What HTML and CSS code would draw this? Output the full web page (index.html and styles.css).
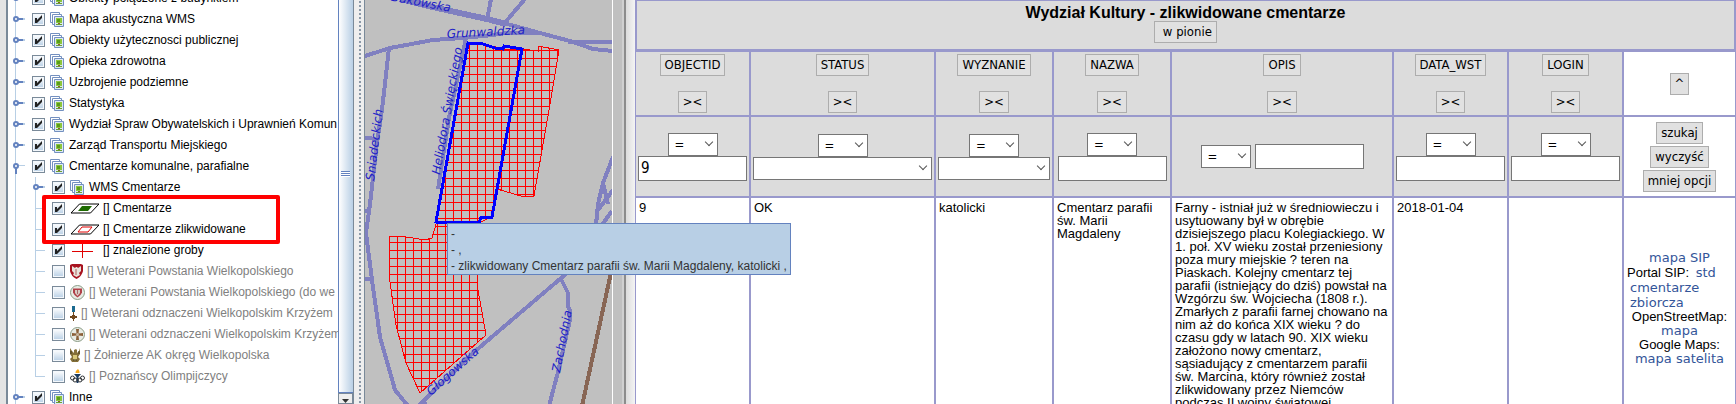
FILE: index.html
```html
<!DOCTYPE html>
<html lang="pl">
<head>
<meta charset="utf-8">
<title>Wydział Kultury - zlikwidowane cmentarze</title>
<link rel="stylesheet" href="styles.css">
</head>
<body>
<svg class="defs" aria-hidden="true">
  <symbol id="layers" viewBox="0 0 15 15">
    <g fill="#fff" stroke="#7390c0"><path d="M.5.5h9v10h-9z"/><path d="M2.500 2.500h9v10h-9z"/><path d="M4.500 4.500h9v10h-9z" fill="#dce8f4"/></g>
    <path d="M6 6h6v5H6z" fill="#8cc63c"/><path d="M7 7h3v3H7z" fill="#5a9c1c"/><path d="M8 11h2v2H8z" fill="#8a6030"/><path d="M6 12h6v1H6z" fill="#6aa030"/>
  </symbol>
</svg>
<main class="app">
  <aside class="tree">
    <ul class="nodes">
      <li><div class="row"><span class="knob"></span><input type="checkbox" id="n0" checked><label for="n0"><svg class="ic w15"><use href="#layers"/></svg>Obiekty połączone z budynkiem</label></div></li>
      <li><div class="row"><span class="knob"></span><input type="checkbox" id="n1" checked><label for="n1"><svg class="ic w15"><use href="#layers"/></svg>Mapa akustyczna WMS</label></div></li>
      <li><div class="row"><span class="knob"></span><input type="checkbox" id="n2" checked><label for="n2"><svg class="ic w15"><use href="#layers"/></svg>Obiekty użytecznosci publicznej</label></div></li>
      <li><div class="row"><span class="knob"></span><input type="checkbox" id="n3" checked><label for="n3"><svg class="ic w15"><use href="#layers"/></svg>Opieka zdrowotna</label></div></li>
      <li><div class="row"><span class="knob"></span><input type="checkbox" id="n4" checked><label for="n4"><svg class="ic w15"><use href="#layers"/></svg>Uzbrojenie podziemne</label></div></li>
      <li><div class="row"><span class="knob"></span><input type="checkbox" id="n5" checked><label for="n5"><svg class="ic w15"><use href="#layers"/></svg>Statystyka</label></div></li>
      <li><div class="row"><span class="knob"></span><input type="checkbox" id="n6" checked><label for="n6"><svg class="ic w15"><use href="#layers"/></svg>Wydział Spraw Obywatelskich i Uprawnień Komun</label></div></li>
      <li><div class="row"><span class="knob"></span><input type="checkbox" id="n7" checked><label for="n7"><svg class="ic w15"><use href="#layers"/></svg>Zarząd Transportu Miejskiego</label></div></li>
      <li><div class="row"><span class="knob open"></span><input type="checkbox" id="n8" checked><label for="n8"><svg class="ic w15"><use href="#layers"/></svg>Cmentarze komunalne, parafialne</label></div>
        <ul class="children">
          <li><div class="row"><span class="knob"></span><input type="checkbox" id="c0" checked><label for="c0"><svg class="ic w15"><use href="#layers"/></svg>WMS Cmentarze</label></div></li>
          <li class="marked">
            <div class="row"><span class="stub"></span><input type="checkbox" id="c1" checked><label for="c1"><svg class="ic w29" viewBox="0 0 29 12"><path d="M1 10.500 9.500 1.500H29L20.500 10.500z" fill="#fff" stroke="#000"/><path d="M8 8.500 12 3.500h10l-4 5z" fill="#1d6b00"/></svg>[] Cmentarze</label></div>
            <div class="row"><span class="stub"></span><input type="checkbox" id="c2" checked><label for="c2"><svg class="ic w29" viewBox="0 0 29 12"><path d="M1 10.500 9.500 1.500H29L20.500 10.500z" fill="#fff" stroke="#000"/><path d="M8 8.500 12 3.500h10l-4 5z" fill="#fff" stroke="#e00000"/></svg>[] Cmentarze zlikwidowane</label></div>
          </li>
          <li><div class="row"><span class="stub"></span><input type="checkbox" id="c3" checked><label for="c3"><svg class="ic w29" viewBox="0 0 29 15"><path d="M2 8.500h21M12.500 1v14" stroke="#e00000"/></svg>[] znalezione groby</label></div></li>
          <li><div class="row off"><span class="stub"></span><input type="checkbox" id="c4"><label for="c4"><svg class="ic w13" viewBox="0 0 13 15"><path d="M0 1 2 0h9l2 1v6q-1 5-6.500 8Q1 12 0 7z" fill="#a81420"/><path d="M2 2l3 2 1-1 1 0 1 1 3-2v5L9 9l1 2-3.500 2L3 11l1-2-2-2z" fill="#e8e4dc"/><path d="M6 5v6" stroke="#b06060"/></svg>[] Weterani Powstania Wielkopolskiego</label></div></li>
          <li><div class="row off"><span class="stub"></span><input type="checkbox" id="c5"><label for="c5"><svg class="ic w15" viewBox="0 0 15 15"><circle cx="7.500" cy="7.500" r="7" fill="#e8ebe4" stroke="#8a9c86"/><path d="M3 3.500h9v4q-1 3-4.500 5Q4 10.500 3 7.500z" fill="#b04048"/><path d="M5 5h5v3L7.500 11 5 8z" fill="#d8ccc4"/><path d="M7.500 5v4" stroke="#a86868"/></svg>[] Weterani Powstania Wielkopolskiego (do we</label></div></li>
          <li><div class="row off"><span class="stub"></span><input type="checkbox" id="c6"><label for="c6"><svg class="ic w7" viewBox="0 0 7 15"><path d="M2 0h3v6H2z" fill="#1b6a90"/><path d="M3 6h1v9H3zM0 10h7v2H0zM2 9h3v4H2z" fill="#704820"/></svg>[] Weterani odznaczeni Wielkopolskim Krzyżem</label></div></li>
          <li><div class="row off"><span class="stub"></span><input type="checkbox" id="c7"><label for="c7"><svg class="ic w15" viewBox="0 0 15 15"><circle cx="7.500" cy="7.500" r="7" fill="#e8ebe4" stroke="#8a9c86"/><path d="M6 2h3l-.5 4.500L13 6v3l-4.500-.5L9 13H6l.5-4.500L2 9V6l4.500.5z" fill="#8a6038"/><circle cx="7.500" cy="7.500" r="1.500" fill="#c8b8a0"/></svg>[] Weterani odznaczeni Wielkopolskim Krzyżem</label></div></li>
          <li><div class="row off"><span class="stub"></span><input type="checkbox" id="c8"><label for="c8"><svg class="ic w10" viewBox="0 0 10 15"><path d="M0 0l2 3 2 2V2l2-1 1 1v3l2-2 1-3v6L8 9l2 2-2 3H2l-2-3 2-2L0 6z" fill="#857038"/><path d="M3 7h4v4l-2 2-2-2z" fill="#d8c878"/><path d="M1 3v3M9 3v3M3 12h4" stroke="#403820"/></svg>[] Żołnierze AK okręg Wielkopolska</label></div></li>
          <li><div class="row off last"><span class="stub"></span><input type="checkbox" id="c9"><label for="c9"><svg class="ic w15" viewBox="0 0 15 15"><path d="M5.500 4Q5 2 8 0q2 2 1.500 4z" fill="#f8a818"/><path d="M4 5h7L8.500 8v6h-2V8z" fill="#1c3c60"/><g fill="none" stroke="#303438"><circle cx="2.500" cy="9" r="2"/><circle cx="12.500" cy="9" r="2"/><circle cx="5" cy="11" r="2"/><circle cx="10" cy="11" r="2"/></g></svg>[] Poznańscy Olimpijczycy</label></div></li>
        </ul>
      </li>
      <li><div class="row"><span class="knob"></span><input type="checkbox" id="n9" checked><label for="n9"><svg class="ic w15"><use href="#layers"/></svg>Inne</label></div></li>
    </ul>
  </aside>
  <div class="scrollbar"><div class="thumb"><span class="grip"></span></div><button class="down" aria-label="Przewiń w dół"></button></div>
  <div class="splitter"></div>
  <section class="map">
    <svg class="canvas" viewBox="365 0 247 404" preserveAspectRatio="xMinYMin slice">
      <defs><pattern id="grid" width="8" height="8" x="5" y="2" patternUnits="userSpaceOnUse"><path d="M.5 0v8M0 .5h8" stroke="#f00" shape-rendering="crispEdges"/></pattern></defs>
      <g fill="none" stroke="#8080c0" stroke-width="4" shape-rendering="crispEdges">
        <path d="M400-1 437 8 487 19 506 24" stroke-width="6"/>
        <path d="M500 22 540 33 570 41 593 49 613 51M568 41.500H613M365 56 390 48 433 40 463 38 493 35 506 33H540M491-1 487 20M525-1 503 25"/>
        <path d="M389 48 382 110 377 143 370 204 366 233 372 280 380 337 395 390 408 406M365 138l13 1M365 211h5M365 279h6"/>
        <path d="M466 38 449 118 438 189"/>
        <path d="M418 406 473 353 567 273 598 245M560 277l8 16v13l2 5v9l-12 52-9 34M422 400l5 6"/>
        <path d="M613 157 603 183 598 204 596 225M603 183 608 204M613 190 598 210M612 211 601 226"/>
      </g>
      <path d="M612 268 582 406" fill="none" stroke="#886655" stroke-width="4" shape-rendering="crispEdges"/>
      <g fill="url(#grid)" stroke="#f00" shape-rendering="crispEdges">
        <path d="M468 43 484 44 504 49 522 49 538 51V46L559 50 549 110 534 196H521L497 189 491 217 479 223 477 262 478 290 482 312 486 335 420 393 406 363 396 325 389 275V250L390 236H400L425 240 432 238 437 221z"/>
      </g>
      <path d="M436 222 468 43 483 44 495 48 503 49 504 46 522 49 492 217H481L479 223z" fill="none" stroke="#00f" stroke-width="3" shape-rendering="crispEdges"/>
      <g class="street">
        <text transform="translate(450 12) rotate(11)" text-anchor="end">Bukowska</text>
        <text transform="translate(447 38) rotate(-3)">Grunwaldzka</text>
        <text transform="translate(440 175) rotate(-80)">Heliodora Święckiego</text>
        <text transform="translate(374 181) rotate(-83)">Śniadeckich</text>
        <text transform="translate(560 373) rotate(-79)">Zachodnia</text>
        <text transform="translate(431 396) rotate(-42)">Głogowska</text>
      </g>
    </svg>
    <div class="tooltip" role="tooltip">-<br>- ,<br>- zlikwidowany Cmentarz parafii św. Marii Magdaleny, katolicki ,</div>
  </section>
  <div class="frame"></div>
  <section class="records">
    <header class="title"><h1>Wydział Kultury - zlikwidowane cmentarze</h1><button>&nbsp;w pionie</button></header>
    <table>
      <colgroup><col class="c-id"><col class="c-status"><col class="c-mid"><col class="c-mid"><col class="c-opis"><col class="c-date"><col class="c-date"><col class="c-act"></colgroup>
      <thead>
        <tr class="names">
          <th><button>OBJECTID</button><button>&gt;&lt;</button></th>
          <th><button>STATUS</button><button>&gt;&lt;</button></th>
          <th><button>WYZNANIE</button><button>&gt;&lt;</button></th>
          <th><button>NAZWA</button><button>&gt;&lt;</button></th>
          <th><button>OPIS</button><button>&gt;&lt;</button></th>
          <th><button>DATA_WST</button><button>&gt;&lt;</button></th>
          <th><button>LOGIN</button><button>&gt;&lt;</button></th>
          <td class="plain"><button>^</button></td>
        </tr>
        <tr class="filters">
          <td><div class="pair"><span class="sel op"><select aria-label="OBJECTID operator"><option>=</option></select></span><input type="text" value="9" aria-label="OBJECTID"></div></td>
          <td><div class="pair"><span class="sel op"><select aria-label="STATUS operator"><option>=</option></select></span><span class="sel wide"><select aria-label="STATUS"><option></option></select></span></div></td>
          <td><div class="pair"><span class="sel op"><select aria-label="WYZNANIE operator"><option>=</option></select></span><span class="sel wide"><select aria-label="WYZNANIE"><option></option></select></span></div></td>
          <td><div class="pair"><span class="sel op"><select aria-label="NAZWA operator"><option>=</option></select></span><input type="text" aria-label="NAZWA"></div></td>
          <td><div class="pair inline"><span class="sel op"><select aria-label="OPIS operator"><option>=</option></select></span><input type="text" aria-label="OPIS"></div></td>
          <td><div class="pair"><span class="sel op"><select aria-label="DATA_WST operator"><option>=</option></select></span><input type="text" aria-label="DATA_WST"></div></td>
          <td><div class="pair"><span class="sel op"><select aria-label="LOGIN operator"><option>=</option></select></span><input type="text" aria-label="LOGIN"></div></td>
          <td class="plain"><div class="actions"><button>szukaj</button><button>wyczyść</button><button>mniej opcji</button></div></td>
        </tr>
      </thead>
      <tbody>
        <tr>
          <td>9</td><td>OK</td><td>katolicki</td><td>Cmentarz parafii<br>św. Marii<br>Magdaleny</td>
          <td>Farny - istniał już w średniowieczu i<br>usytuowany był w obrębie<br>dzisiejszego placu Kolegiackiego. W<br>1. poł. XV wieku został przeniesiony<br>poza mury miejskie ? teren na<br>Piaskach. Kolejny cmentarz tej<br>parafii (istniejący do dziś) powstał na<br>Wzgórzu św. Wojciecha (1808 r.).<br>Zmarłych z parafii farnej chowano na<br>nim aż do końca XIX wieku ? do<br>czasu gdy w latach 90. XIX wieku<br>założono nowy cmentarz,<br>sąsiadujący z cmentarzem parafii<br>św. Marcina, który również został<br>zlikwidowany przez Niemców<br>podczas II wojny światowej.</td>
          <td>2018-01-04</td><td></td>
          <td class="links"><a href="#">mapa SIP</a><p class="portal">Portal SIP: <a href="#">std<br>cmentarze<br>zbiorcza</a></p><p>OpenStreetMap:</p><a href="#">mapa</a><p>Google Maps:</p><a href="#">mapa satelita</a></td>
        </tr>
      </tbody>
    </table>
  </section>
</main>
</body>
</html>
```
FILE: styles.css
```css
*, *::before, *::after { box-sizing: border-box; }
body { margin: 0; font: 13px/13px "Liberation Sans", Arial, sans-serif; color: #000; background: #fff; }
.defs { position: absolute; width: 0; height: 0; }
.app { display: flex; height: 100vh; overflow: hidden; background: #e4e4e4; }

/* layer tree */
.tree { flex: 0 0 332px; margin-left: 6px; overflow: hidden; background: #fff; border-left: 2px solid #7a8a99; font-size: 12px; }
.nodes, .children { list-style: none; margin: 0; padding: 0; }
.nodes { margin-top: -12px; background: linear-gradient(#b8cfe5, #b8cfe5) 7px 0 / 1px 100% no-repeat; }
.row { display: flex; align-items: center; height: 21px; padding-left: 3px; white-space: nowrap; }
.children { background: linear-gradient(#b8cfe5, #b8cfe5) 27px 0 / 1px 199px no-repeat; }
.children .row { padding-left: 23px; }
.off { color: #808080; }
.knob, .stub { flex: none; position: relative; width: 21px; height: 21px; }
.knob::before { content: ""; position: absolute; left: 2px; top: 7px; width: 6px; height: 6px; border: 2px solid #6382bf; border-radius: 3px; background: #fff; z-index: 1; }
.knob::after { content: ""; position: absolute; left: 7px; top: 9px; width: 7px; height: 2px; background: linear-gradient(90deg, #6382bf 5px, #b8cfe5 5px); }
.knob.open::after { left: 4px; top: 9px; width: 10px; height: 9px; background: linear-gradient(#6382bf, #6382bf) 0 3px / 2px 6px no-repeat, linear-gradient(#b8cfe5, #b8cfe5) 4px 0 / 6px 1px no-repeat; }
.stub::after { content: ""; position: absolute; left: 4px; top: 10px; width: 10px; height: 1px; background: #b8cfe5; }
.row input { appearance: none; flex: none; margin: 0 5px 0 0; width: 13px; height: 13px; border: 1px solid #7a8a99; box-shadow: inset 0 0 0 1px #f4f8fc; background: linear-gradient(#fff, #b8cfe5); }
.row input:checked::before { content: ""; display: block; width: 11px; height: 11px; background: #222; clip-path: polygon(2px 4px, 4px 4px, 4px 6px, 9px 1px, 9px 4px, 4px 9px, 2px 9px); }
.row label { display: flex; align-items: center; gap: 4px; }
.ic { flex: none; height: 15px; }
.w29 { width: 29px; } .w15 { width: 15px; } .w13 { width: 13px; } .w10 { width: 10px; } .w7 { width: 7px; }
.marked { position: relative; }
.marked::after { content: ""; position: absolute; left: 34px; top: -3px; width: 238px; height: 49px; border: 4px solid #f00; border-radius: 2px; pointer-events: none; }

.scrollbar { flex: 0 0 16px; display: flex; flex-direction: column; border-right: 1px solid #7a8a99; }
.thumb { flex: 1; display: flex; align-items: center; padding: 0 2px 44px; border-left: 1px solid #6382bf; border-bottom: 1px solid #6382bf; background: linear-gradient(90deg, #fff, #b8cfe5); }
.grip { width: 9px; height: 6px; background: repeating-linear-gradient(#6382bf 0 1px, #fff 1px 2px); }
.down { height: 11px; border: 1px solid #7a8a99; background: #eee; padding: 5px 3px 0; }
.down::before { content: ""; display: block; width: 7px; height: 4px; background: #333; clip-path: polygon(0 0, 100% 0, 50% 100%); }
.splitter { flex: 0 0 11px; border-right: 1px solid #7a8a99; background: radial-gradient(#8a98a8 1px, #0000 1px) 4px 0 / 4px 4px repeat-y, #eee; }

/* map */
.map { flex: 0 0 247px; position: relative; background: #c0c0c0; }
.canvas { display: block; width: 100%; height: 100%; }
.street { font: italic 12px "DejaVu Sans", sans-serif; fill: #2020c8; }
.tooltip { position: absolute; left: 82px; top: 223px; padding: 2px 3px 0; border: 1px solid #6382bf; background: #b8cfe5; color: #333; font-size: 12px; line-height: 16px; white-space: nowrap; z-index: 2; }
.frame { flex: 0 0 23px; background: linear-gradient(90deg, #fff 1px, #c0c0c0 1px 10px, #d0d0d0 10px 12px, #8c8c8c 12px 14px, #dcdcdc 14px, #f4f4f4); }

/* records */
.records { flex: 1; min-width: 0; background: #fff; }
.records button { display: block; height: 22px; margin: 0 auto; padding: 0 4px; border: 1px solid #adadad; background: #e1e1e1; font: 13px/18px "DejaVu Sans Condensed", Tahoma, sans-serif; color: #000; }
.title { height: 52px; padding-top: 4px; border: 1px solid #99c; border-width: 1px 2px 3px; background: #dcdcdc; text-align: center; }
.title h1 { margin: 0; font-size: 16px; line-height: 16px; }
table { width: 100%; table-layout: fixed; border-collapse: separate; border-spacing: 0; border-left: 1px solid #99c; }
.c-id { width: 115px; } .c-status { width: 185px; } .c-mid { width: 118px; } .c-opis { width: 222px; } .c-date { width: 115px; } .c-act { width: 113px; }
th, td { border: solid #99c; border-width: 0 2px 2px 0; padding: 3px; text-align: left; vertical-align: top; font-weight: normal; }
thead th, thead td { background: #dcdcdc; vertical-align: middle; }
thead td.plain { background: #fff; }
.names th { padding: 2px; }
.names th button + button { margin-top: 15px; }
.filters td { height: 81px; padding: 2px; }
.pair { display: flex; flex-direction: column; align-items: center; }
.pair.inline { flex-direction: row; justify-content: center; gap: 4px; }
.sel { display: block; position: relative; height: 23px; }
.sel::after { content: ""; position: absolute; right: 6px; top: 6px; width: 6px; height: 6px; border: solid #555; border-width: 0 1px 1px 0; transform: rotate(45deg); pointer-events: none; }
.op { width: 50px; }
.wide { width: 100%; }
.sel select { appearance: none; width: 100%; height: 100%; padding: 0 6px; border: 1px solid #767676; border-radius: 0; background: #fff; font: 13px "DejaVu Sans Condensed", sans-serif; color: #000; }
.pair > input { width: 109px; max-width: 100%; height: 25px; padding: 0 2px; border: 1px solid #767676; font: 15px "DejaVu Sans Condensed", sans-serif; }
.actions { display: flex; flex-direction: column; gap: 2px; }
tbody td { height: 240px; }
td.links { padding: 52px 3px 0; text-align: center; }
.links p { margin: 0; }
.links a { padding: 0 3px; box-decoration-break: clone; -webkit-box-decoration-break: clone; font: 13px/15px "DejaVu Sans", Verdana, sans-serif; color: #359; text-decoration: none; }
.links .portal { text-align: left; }
```
